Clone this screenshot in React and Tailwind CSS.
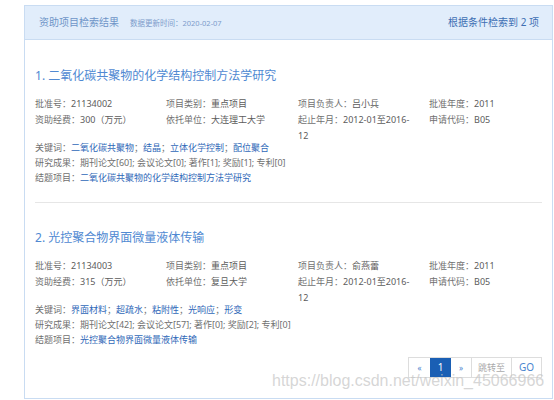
import React from "react";

const projects = [
  {
    no: 1,
    title: "二氧化碳共聚物的化学结构控制方法学研究",
    code: "21134002",
    type: "重点项目",
    leader: "吕小兵",
    year: "2011",
    fund: "300（万元）",
    org: "大连理工大学",
    apply: "B05",
    keywords: ["二氧化碳共聚物", "结晶", "立体化学控制", "配位聚合"],
    results: "期刊论文[60]; 会议论文[0]; 著作[1]; 奖励[1]; 专利[0]",
  },
  {
    no: 2,
    title: "光控聚合物界面微量液体传输",
    code: "21134003",
    type: "重点项目",
    leader: "俞燕蕾",
    year: "2011",
    fund: "315（万元）",
    org: "复旦大学",
    apply: "B05",
    keywords: ["界面材料", "超疏水", "粘附性", "光响应", "形变"],
    results: "期刊论文[42]; 会议论文[57]; 著作[0]; 奖励[2]; 专利[0]",
  },
];

function Field({ label, children }) {
  return (
    <div className="text-[#707070]">
      {label}：<span className="text-[#5c5c5c]">{children}</span>
    </div>
  );
}

function ProjectItem({ p, divider }) {
  return (
    <div className={divider ? "pt-[26px] pb-[17px] border-b border-[#e6e6e6]" : "pt-[25px]"}>
      <div className="text-[12px] leading-[20px] text-[#5089d2]">
        {p.no}. {p.title}
      </div>
      <div className="mt-[10px] grid grid-cols-[131px_132px_131px_1fr] text-[9px] leading-[16px]">
        <Field label="批准号">{p.code}</Field>
        <Field label="项目类别">{p.type}</Field>
        <Field label="项目负责人">{p.leader}</Field>
        <Field label="批准年度">{p.year}</Field>
        <Field label="资助经费">{p.fund}</Field>
        <Field label="依托单位">{p.org}</Field>
        <Field label="起止年月">
          2012-01至2016-
          <br />
          12
        </Field>
        <Field label="申请代码">{p.apply}</Field>
      </div>
      <div className="mt-[-4px] text-[9px] leading-[15px] text-[#707070]">
        <div>
          关键词：
          {p.keywords.map((k, i) => (
            <span key={k}>
              <span className="text-[#2f68b8]">{k}</span>
              {i < p.keywords.length - 1 ? "；" : ""}
            </span>
          ))}
        </div>
        <div>研究成果：{p.results}</div>
        <div>
          结题项目：<span className="text-[#2f68b8]">{p.title}</span>
        </div>
      </div>
    </div>
  );
}

export default function App() {
  return (
    <div className="relative w-[554px] h-[400px] bg-white overflow-hidden font-['Noto_Sans','Noto_Sans_CJK_SC',sans-serif]">
      <div className="ml-[24px] mt-[5px] w-[529px] h-[394px] border border-[#c9dcf2] flex flex-col">
        <div className="h-[34px] shrink-0 bg-[#e1edfb] border-b border-[#c9dcf2] flex items-center justify-between pl-[14px] pr-[13px]">
          <div className="flex items-baseline gap-[11px]">
            <span className="text-[10px] text-[#6f95c8]">资助项目检索结果</span>
            <span className="text-[7.5px] text-[#7d9ccb]">数据更新时间：2020-02-07</span>
          </div>
          <span className="text-[10px] text-[#3e6fb3]">根据条件检索到 2 项</span>
        </div>
        <div className="px-[10px]">
          <ProjectItem p={projects[0]} divider />
          <ProjectItem p={projects[1]} />
          <div className="mt-[10px] flex justify-end">
            <div className="flex h-[21px] border border-[#dddddd] text-[9px]">
              <span className="w-[21px] flex items-center justify-center text-[#4a86cf] text-[8px]">«</span>
              <span className="w-[21px] flex items-center justify-center bg-[#1a5fb4] text-white text-[10px]">1</span>
              <span className="w-[21px] flex items-center justify-center text-[#4a86cf] text-[8px] border-r border-[#dddddd]">»</span>
              <span className="w-[40px] flex items-center justify-center text-[#aaaaaa] border-r border-[#dddddd]">跳转至</span>
              <span className="w-[29px] flex items-center justify-center text-[#4a86cf] text-[10px]">GO</span>
            </div>
          </div>
        </div>
      </div>
      <div className="absolute left-[272px] top-[371px] text-[16px] leading-[20px] text-[#c4c4c4]/70 font-['Liberation_Sans',sans-serif] pointer-events-none">
        https://blog.csdn.net/weixin_45066966
      </div>
    </div>
  );
}
